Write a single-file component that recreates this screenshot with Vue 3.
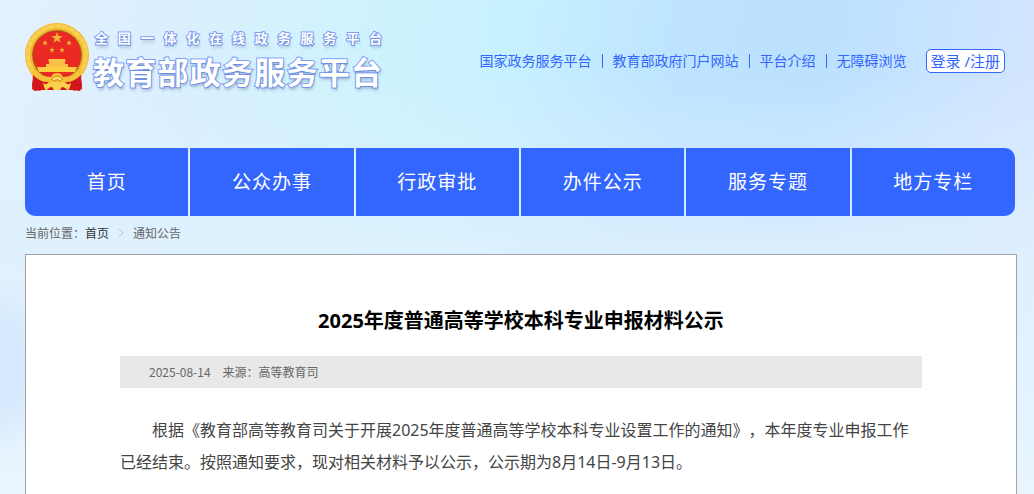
<template>
  <div class="page">
    <header class="header">
      <a class="logo" href="#">
        <svg class="emblem" viewBox="0 0 64 69" aria-hidden="true">
          <path d="M10 46 H54 L57 62 L55 68 L47 67 H17 L9 68 L7 62 Z" fill="#d3161b" />
          <circle cx="32" cy="32" r="32" fill="#efb730" />
          <circle cx="32" cy="32" r="29" fill="none" stroke="#f9d251" stroke-width="4" />
          <circle cx="32" cy="32" r="29" fill="none" stroke="#e3a428" stroke-width="2" stroke-dasharray="2 5" opacity="0.3" />
          <circle cx="32" cy="32" r="25" fill="#a8691a" />
          <circle cx="32" cy="32" r="24" fill="#ea2923" />
          <path
            v-for="star in stars"
            :key="star.x"
            :d="starPath(star.x, star.y, star.r)"
            fill="#f0b43a"
          />
          <path d="M24 36 H40 L41 38 H23 Z M24 38 H40 V42 H24 Z M21 41 H43 V44 H21 Z" fill="#f9c247" />
          <path d="M12 44 H52 L50 49 H14 Z" fill="#fdcf3f" />
          <path d="M8 45 Q15 54 26 54 L28 51 Q32 49 36 51 L38 54 Q49 54 56 45 L57 53 Q49 60 39 60 L36 58 Q32 55 28 58 L25 60 Q15 60 7 53 Z" fill="#f5c23a" />
          <path d="M8 52 Q16 60 24 59 L17 65 L15 68 L10 65 L7 67 Z M56 52 Q48 60 40 59 L47 65 L49 68 L54 65 L57 67 Z" fill="#d3161b" />
          <path d="M26 56 Q32 50 38 56 L35 58 Q32 55 29 58 Z" fill="#ffdb68" stroke="#dc8c20" />
          <path d="M18 60 Q23 63 28 60 Q32 64 36 60 Q41 63 46 60 Q45 65 43 68 Q40 64 37 64 L35 67 H29 L27 64 Q24 64 21 68 Q19 65 18 60 Z" fill="#fbd04a" />
        </svg>
        <span class="logo-text">
          <span class="logo-sub">全国一体化在线政务服务平台</span>
          <span class="logo-title">教育部政务服务平台</span>
        </span>
      </a>
      <div class="top-links">
        <a v-for="link in topLinks" :key="link" class="top-link" href="#">{{ link }}</a>
        <button class="login" type="button">登录 /注册</button>
      </div>
    </header>

    <nav class="nav">
      <a v-for="item in navItems" :key="item" class="nav-item" href="#">{{ item }}</a>
    </nav>

    <div class="crumbs">
      <span>当前位置：</span>
      <a class="crumb-home" href="#">首页</a>
      <svg class="crumb-arrow" viewBox="0 0 6 10" aria-hidden="true">
        <path d="M1 1 L5 5 L1 9" fill="none" stroke="#b9c2cc" />
      </svg>
      <a class="crumb-current" href="#">通知公告</a>
    </div>

    <main class="card">
      <h1 class="title">2025年度普通高等学校本科专业申报材料公示</h1>
      <div class="meta">
        <span>2025-08-14</span>
        <span>来源：高等教育司</span>
      </div>
      <p class="content">根据《教育部高等教育司关于开展2025年度普通高等学校本科专业设置工作的通知》，本年度专业申报工作已经结束。按照通知要求，现对相关材料予以公示，公示期为8月14日-9月13日。</p>
    </main>
  </div>
</template>

<script setup>
const topLinks = ['国家政务服务平台', '教育部政府门户网站', '平台介绍', '无障碍浏览']
const navItems = ['首页', '公众办事', '行政审批', '办件公示', '服务专题', '地方专栏']

const stars = [
  { x: 32, y: 15, r: 6 },
  { x: 20, y: 20, r: 3 },
  { x: 44, y: 20, r: 3 },
  { x: 27, y: 27, r: 3 },
  { x: 37, y: 27, r: 3 },
]

function starPath(cx, cy, r) {
  const points = []
  for (let i = 0; i < 10; i++) {
    const radius = i % 2 ? r * 0.4 : r
    const angle = (Math.PI / 5) * i - Math.PI / 2
    points.push(`${(cx + radius * Math.cos(angle)).toFixed(2)} ${(cy + radius * Math.sin(angle)).toFixed(2)}`)
  }
  return `M${points.join('L')}Z`
}
</script>

<style>
body {
  margin: 0;
}
</style>

<style scoped>
.page {
  display: flex;
  flex-direction: column;
  box-sizing: border-box;
  min-height: 100vh;
  padding: 0 17px 0 25px;
  font-family: "Noto Sans", "Noto Sans CJK SC", sans-serif;
  text-spacing-trim: space-all;
  background:
    radial-gradient(ellipse 60px 90px at 0 74%, #d6e8fd 40%, rgba(214, 232, 253, 0) 100%),
    linear-gradient(180deg, rgba(226, 241, 254, 0) 15%, rgba(224, 241, 254, 0.85) 52%, #e8f5ff 100%),
    linear-gradient(100deg, #e3f1ff 0%, #dceffe 14%, #cdf3fe 36%, #c8f1ff 46%, #bde3ff 62%, #bbe1ff 74%, #d1e5ff 92%, #d4e7ff 100%);
}

a {
  color: inherit;
  text-decoration: none;
}

.header {
  display: flex;
  align-items: flex-start;
  justify-content: space-between;
  height: 125px;
  padding: 23px 12px 0 0;
}

.logo {
  display: flex;
  gap: 4px;
}

.emblem {
  width: 64px;
  height: 69px;
}

.logo-text {
  display: flex;
  flex-direction: column;
  width: 289px;
  color: #fff;
  font-weight: 700;
  white-space: nowrap;
  text-align-last: justify;
  paint-order: stroke fill;
  -webkit-text-stroke: 2px #7f9ff9;
  text-shadow: 1px 3px 3px rgba(70, 100, 150, 0.35);
}

.logo-sub {
  padding: 3px 0 0 2px;
  font-size: 13px;
  line-height: 24px;
}

.logo-title {
  font-size: 31px;
  line-height: 45px;
}

.top-links {
  display: flex;
  align-items: center;
  padding-top: 26px;
  color: #36f;
  font-size: 14px;
  line-height: 14px;
}

.top-link + .top-link {
  margin-left: 10px;
  padding-left: 10px;
  border-left: 1px solid #36f;
}

.login {
  height: 24px;
  margin-left: 19px;
  padding: 0 4px;
  border: 1px solid #36f;
  border-radius: 5px;
  background: #fff;
  color: #36f;
  font-family: inherit;
  font-size: 15px;
  line-height: 20px;
  cursor: pointer;
}

.nav {
  display: flex;
  gap: 2px;
  margin-right: 2px;
  border-radius: 10px;
  overflow: hidden;
}

.nav-item {
  flex: 1;
  background: #36f;
  color: #fff;
  font-size: 19px;
  letter-spacing: 1px;
  line-height: 68px;
  text-align: center;
}

.crumbs {
  display: flex;
  align-items: center;
  height: 38px;
  box-sizing: border-box;
  padding-bottom: 4px;
  color: #666;
  font-size: 12px;
}

.crumb-home {
  color: #333;
}

.crumb-arrow {
  width: 6px;
  height: 10px;
  margin: 0 9px;
}

.card {
  flex: 1;
  padding: 50px 94px 16px;
  border: 1px solid #a0a4a8;
  border-bottom: none;
  background: #fff;
}

.title {
  margin: 0;
  color: #000;
  font-size: 20px;
  line-height: 32px;
  text-align: center;
}

.meta {
  display: flex;
  gap: 12px;
  margin-top: 19px;
  padding: 0 29px;
  background: #e8e8e8;
  color: #666;
  font-family: "Noto Sans CJK SC", sans-serif;
  font-size: 12px;
  line-height: 32px;
}

.content {
  margin: 26px 0 0;
  color: #444;
  font-size: 16px;
  line-height: 32px;
  text-indent: 2em;
}
</style>
